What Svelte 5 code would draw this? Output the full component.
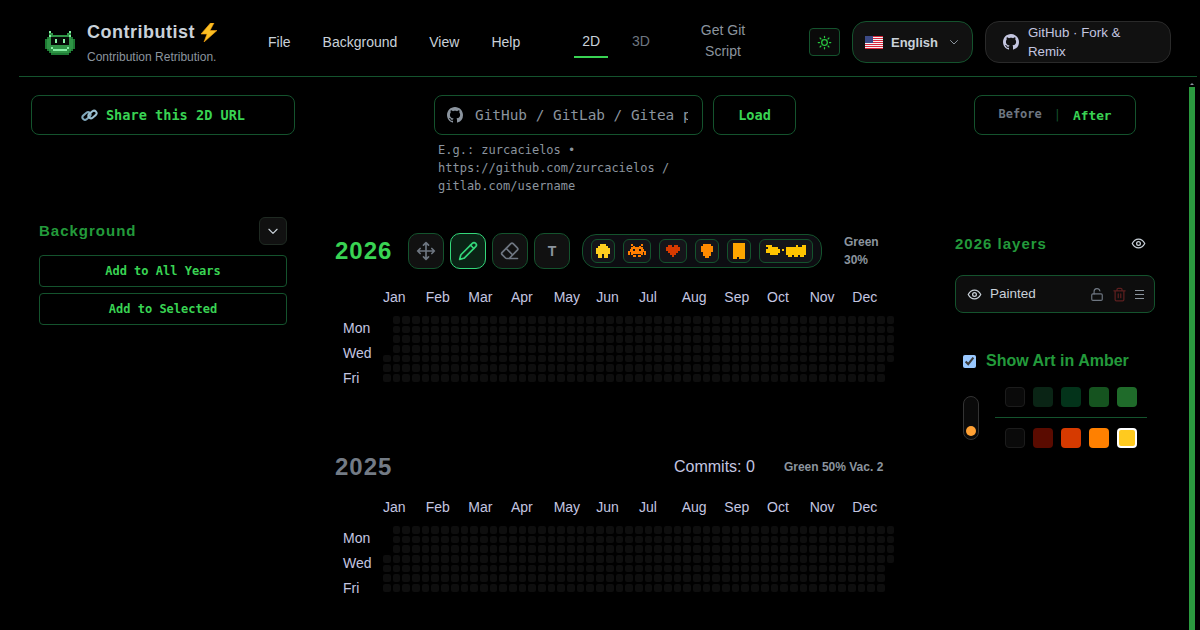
<script>
	const months = ['Jan', 'Feb', 'Mar', 'Apr', 'May', 'Jun', 'Jul', 'Aug', 'Sep', 'Oct', 'Nov', 'Dec'];
	const nav = ['File', 'Background', 'View', 'Help'];
	const github =
		'M8 0C3.58 0 0 3.58 0 8c0 3.54 2.29 6.53 5.47 7.59.4.07.55-.17.55-.38 0-.19-.01-.82-.01-1.49-2.01.37-2.53-.49-2.69-.94-.09-.23-.48-.94-.82-1.13-.28-.15-.68-.52-.01-.53.63-.01 1.08.58 1.23.82.72 1.21 1.87.87 2.33.66.07-.52.28-.87.51-1.07-1.78-.2-3.64-.89-3.64-3.95 0-.87.31-1.59.82-2.15-.08-.2-.36-1.02.08-2.12 0 0 .67-.21 2.2.82.64-.18 1.32-.27 2-.27.68 0 1.36.09 2 .27 1.53-1.04 2.2-.82 2.2-.82.44 1.1.16 1.92.08 2.12.51.56.82 1.27.82 2.15 0 3.07-1.87 3.75-3.65 3.95.29.25.54.73.54 1.48 0 1.07-.01 1.93-.01 2.2 0 .21.15.46.55.38A8.013 8.013 0 0016 8c0-4.42-3.58-8-8-8z';

	const logoColors = { g: '#1d7a33', m: '#2f9446', l: '#86f0a4', k: '#050a06' };
	const logo = [
		'..l.........l..',
		'..mm.......mm..',
		'..lmmmmmmmmml..',
		'.gmkkkkkkkkkmg.',
		'gmmkklkkklkkmmg',
		'gmmkklkkklkkmmg',
		'gmmkkkkkkkkkmmg',
		'gmmmmmmmmmmmmmg',
		'gmmlmmmmmmmlmmg',
		'.gmmlllllllmmg.',
		'..gmmmmmmmmmg..',
		'...ggggggggg...'
	];

	const stamps = [
		{
			color: '#ffce1f',
			px: 2,
			w: 24,
			rows: ['..###..', '.#####.', '#######', '#######', '#######', '.##.##.', '.##.##.']
		},
		{
			color: '#ff7f00',
			px: 1.64,
			w: 28,
			rows: [
				'..#.....#..',
				'...#...#...',
				'..#######..',
				'.##.###.##.',
				'###########',
				'#.#######.#',
				'#.#.....#.#',
				'...##.##...'
			]
		},
		{
			color: '#d63a00',
			px: 2,
			w: 28,
			rows: ['.##.##.', '#######', '#######', '.#####.', '..###..', '...#...']
		},
		{
			color: '#ff8a00',
			px: 2,
			w: 24,
			rows: ['.####.', '######', '######', '######', '.####.', '.####.', '..##..']
		},
		{
			color: '#ffa600',
			px: 2,
			w: 24,
			rows: ['######', '######', '######', '######', '######', '######', '######', '##.###']
		},
		{
			color: '#ffc400',
			px: 2,
			w: 54,
			rows: [
				'###............#..##',
				'.#####....##########',
				'#######.#.##########',
				'#######...##########',
				'..####....##########',
				'...........##.##.##.'
			]
		}
	];

	const greens = ['#0a0a0a', '#0a2415', '#03331a', '#15531f', '#1f6b2a'];
	const ambers = ['#0a0a0a', '#5a0b00', '#d63a00', '#ff8000', '#ffca1f'];

	// weeks run sunday first, so the year's first weekday decides the gap
	function cells(startDay, total) {
		return Array.from({ length: startDay + total }, (_, i) => i >= startDay);
	}

	const years = [
		{ year: 2026, active: true, days: cells(4, 365) },
		{ year: 2025, active: false, days: cells(3, 365) }
	];
</script>

{#snippet sprite(rows, color, px)}
	<svg
		width={rows[0].length * px}
		height={rows.length * px}
		viewBox="0 0 {rows[0].length} {rows.length}"
		shape-rendering="crispEdges"
		fill={color}
	>
		{#each rows as row, y}
			{#each row.split('') as ch, x}
				{#if ch === '#'}
					<rect {x} {y} width="1" height="1" />
				{/if}
			{/each}
		{/each}
	</svg>
{/snippet}

{#snippet eye()}
	<svg class="icon-15" viewBox="0 0 24 24" fill="none" stroke="currentColor" stroke-width="2" stroke-linecap="round" stroke-linejoin="round">
		<path d="M2 12s3.6-7 10-7 10 7 10 7-3.6 7-10 7-10-7-10-7z" />
		<circle cx="12" cy="12" r="3" />
	</svg>
{/snippet}

<div class="page">
	<header class="header">
		<div class="brand">
			<svg class="logo" width="30" height="24" viewBox="0 0 15 12" shape-rendering="crispEdges">
				{#each logo as row, y}
					{#each row.split('') as ch, x}
						{#if ch !== '.'}
							<rect {x} {y} width="1" height="1" fill={logoColors[ch]} />
						{/if}
					{/each}
				{/each}
			</svg>
			<div class="brand-text">
				<div class="brand-title">
					Contributist
					<svg width="18" height="19" viewBox="0 0 18 19">
						<path d="M10.5 0 1 11h6l-3 8 13-11.5h-7L14 0z" fill="#fbbf24" stroke="#f59e0b" stroke-width=".6" />
					</svg>
				</div>
				<div class="brand-sub">Contribution Retribution.</div>
			</div>
		</div>

		<nav class="menu">
			{#each nav as item}
				<span>{item}</span>
			{/each}
		</nav>

		<div class="tabs">
			<span class="tab tab-on">2D</span>
			<span class="tab">3D</span>
		</div>

		<div class="git-script">Get Git Script</div>

		<button class="theme-btn" aria-label="Theme">
			<svg width="15" height="15" viewBox="0 0 24 24" fill="none" stroke="currentColor" stroke-width="2" stroke-linecap="round">
				<circle cx="12" cy="12" r="4.5" />
				<path d="M12 2v2M12 20v2M4.9 4.9l1.4 1.4M17.7 17.7l1.4 1.4M2 12h2M20 12h2M4.9 19.1l1.4-1.4M17.7 6.3l1.4-1.4" />
			</svg>
		</button>

		<div class="lang">
			<svg class="flag" width="18" height="13" viewBox="0 0 18 13">
				<rect width="18" height="13" rx="1.5" fill="#f4f4f4" />
				<path d="M0 .5h18M0 2.5h18M0 4.5h18M0 6.5h18M0 8.5h18M0 10.5h18M0 12.5h18" stroke="#d8263c" stroke-width="1" />
				<rect width="8" height="7" fill="#3c4a85" />
			</svg>
			<span>English</span>
			<svg class="lang-chev" width="12" height="12" viewBox="0 0 24 24" fill="none" stroke="currentColor" stroke-width="2" stroke-linecap="round" stroke-linejoin="round">
				<path d="m5 9 7 7 7-7" />
			</svg>
		</div>

		<div class="fork">
			<svg width="16" height="16" viewBox="0 0 16 16" fill="currentColor"><path d={github} /></svg>
			<span>GitHub · Fork &amp; Remix</span>
		</div>
	</header>

	<div class="body">
		<div class="content">
			<div class="topbar">
				<button class="share">
					<svg width="17" height="15" viewBox="0 0 17 15" fill="none" stroke-width="2">
						<rect x="1" y="5.5" width="9" height="5" rx="2.5" stroke="#7fa6ba" transform="rotate(-40 5.5 8)" />
						<rect x="7" y="4" width="9" height="5" rx="2.5" stroke="#9cc0d2" transform="rotate(-40 11.5 6.5)" />
					</svg>
					Share this 2D URL
				</button>

				<div class="loader">
					<div class="loader-row">
						<label class="repo">
							<svg width="16" height="16" viewBox="0 0 16 16" fill="currentColor"><path d={github} /></svg>
							<input placeholder="GitHub / GitLab / Gitea profile URL" />
						</label>
						<button class="load">Load</button>
					</div>
					<p class="hint">E.g.: zurcacielos • https://github.com/zurcacielos / gitlab.com/username</p>
				</div>

				<div class="compare">
					<span class="before">Before</span>
					<span class="sep">|</span>
					<span class="after">After</span>
				</div>
			</div>

			<div class="workspace">
				<aside class="left">
					<div class="left-head">
						<h3>Background</h3>
						<button class="chev" aria-label="Collapse">
							<svg width="14" height="14" viewBox="0 0 24 24" fill="none" stroke="currentColor" stroke-width="2" stroke-linecap="round" stroke-linejoin="round">
								<path d="m5 9 7 7 7-7" />
							</svg>
						</button>
					</div>
					<button class="add">Add to All Years</button>
					<button class="add">Add to Selected</button>
				</aside>

				<main class="years">
					{#each years as y}
						<section class="year" class:active={y.active}>
							<div class="year-head">
								<span class="year-num">{y.year}</span>
								{#if y.active}
									<div class="tools">
										<button class="tool" aria-label="Move">
											<svg class="icon-20" viewBox="0 0 24 24" fill="none" stroke="currentColor" stroke-width="2" stroke-linecap="round" stroke-linejoin="round">
												<path d="M12 2v20M2 12h20M15 19l-3 3-3-3M19 9l3 3-3 3M5 9l-3 3 3 3M9 5l3-3 3 3" />
											</svg>
										</button>
										<button class="tool tool-on" aria-label="Draw">
											<svg class="icon-20" viewBox="0 0 24 24" fill="none" stroke="currentColor" stroke-width="2" stroke-linecap="round" stroke-linejoin="round">
												<path d="M21.2 6.8a2.8 2.8 0 0 0-4-4L3.8 16.2a2 2 0 0 0-.5.9L2 22l4.9-1.3a2 2 0 0 0 .9-.5z" />
												<path d="m15 5 4 4" />
											</svg>
										</button>
										<button class="tool" aria-label="Erase">
											<svg class="icon-20" viewBox="0 0 24 24" fill="none" stroke="currentColor" stroke-width="2" stroke-linecap="round" stroke-linejoin="round">
												<path d="M21 21H8a2 2 0 0 1-1.4-.6l-4-4a2 2 0 0 1 0-2.8L13 3.2a2 2 0 0 1 2.8 0l5 5a2 2 0 0 1 0 2.8L11 21" />
												<path d="m7.5 9 7.5 7.5" />
											</svg>
										</button>
										<button class="tool tool-text">T</button>
									</div>
									<div class="stamps">
										{#each stamps as s}
											<button class="stamp" aria-label="Stamp" style="width: {s.w}px">
												{@render sprite(s.rows, s.color, s.px)}
											</button>
										{/each}
									</div>
									<div class="stat stat-narrow">Green 30%</div>
								{:else}
									<span class="commits">Commits: 0</span>
									<div class="stat">Green 50% Vac. 2</div>
								{/if}
							</div>

							<div class="months">
								{#each months as m}
									<span>{m}</span>
								{/each}
							</div>

							<div class="graph">
								<div class="days">
									<span>Mon</span>
									<span>Wed</span>
									<span>Fri</span>
								</div>
								<div class="cells">
									{#each y.days as on}
										<i class:on></i>
									{/each}
								</div>
							</div>
						</section>
					{/each}
				</main>

				<aside class="right">
					<div class="layers-head">
						<h3>2026 layers</h3>
						<span class="eye-top">{@render eye()}</span>
					</div>

					<div class="layer">
						<span class="layer-eye">{@render eye()}</span>
						<span class="layer-name">Painted</span>
						<svg class="lock" width="14" height="15" viewBox="0 0 24 24" fill="none" stroke="currentColor" stroke-width="2" stroke-linecap="round" stroke-linejoin="round">
							<rect x="3" y="11" width="18" height="11" rx="2" />
							<path d="M7 11V7a5 5 0 0 1 9.9-1" />
						</svg>
						<svg class="trash" width="15" height="15" viewBox="0 0 24 24" fill="none" stroke="currentColor" stroke-width="2" stroke-linecap="round" stroke-linejoin="round">
							<path d="M3 6h18M19 6v14a2 2 0 0 1-2 2H7a2 2 0 0 1-2-2V6M8 6V4a2 2 0 0 1 2-2h4a2 2 0 0 1 2 2v2M10 11v6M14 11v6" />
						</svg>
						<svg class="grip" width="9" height="11" viewBox="0 0 9 11" fill="none" stroke="currentColor" stroke-width="1.2">
							<path d="M0 1.5h9M0 5.5h9M0 9.5h9" />
						</svg>
					</div>

					<label class="amber">
						<input type="checkbox" checked />
						<span>Show Art in Amber</span>
					</label>

					<div class="palette">
						<div class="slider"><b></b></div>
						<div class="ramps">
							<div class="ramp">
								{#each greens as c, i}
									<span class="swatch" class:first={i === 0} style="background: {c}"></span>
								{/each}
							</div>
							<div class="ramp-line"></div>
							<div class="ramp">
								{#each ambers as c, i}
									<span class="swatch" class:first={i === 0} class:picked={i === 4} style="background: {c}"></span>
								{/each}
							</div>
						</div>
					</div>
				</aside>
			</div>
		</div>

		<div class="rail">
			<span class="rail-up"></span>
			<span class="rail-thumb"></span>
		</div>
	</div>
</div>

<style>
	:global(body) {
		background: #000;
		font-family: 'Liberation Sans', Arial, sans-serif;
	}

	button {
		font: inherit;
		cursor: pointer;
		padding: 0;
	}

	h3 {
		margin: 0;
		font-size: 15px;
		font-weight: 700;
		letter-spacing: 1px;
		color: #239a3b;
	}

	.page {
		width: 1200px;
		height: 630px;
		overflow: hidden;
		background: #000;
		display: flex;
		flex-direction: column;
	}

	/* header */
	.header {
		height: 68px;
		flex-shrink: 0;
		margin: 0 3px 0 19px;
		padding: 8px 0 0 26px;
		display: flex;
		align-items: center;
		border-bottom: 1px solid #14532d;
	}

	.brand {
		width: 223px;
		display: flex;
		align-items: center;
		gap: 12px;
	}

	.logo {
		flex-shrink: 0;
		margin-top: 2px;
	}

	.brand-title {
		display: flex;
		align-items: center;
		gap: 5px;
		font-size: 18px;
		font-weight: 700;
		letter-spacing: 0.5px;
		color: #c9d1d9;
		height: 24px;
	}

	.brand-sub {
		margin-top: 6px;
		font-size: 12px;
		color: #8b949e;
	}

	.menu {
		display: flex;
		gap: 32px;
		font-size: 14px;
		color: #c9d1d9;
	}

	.tabs {
		display: flex;
		gap: 16px;
		margin-left: 54px;
		align-self: flex-start;
		margin-top: 22px;
	}

	.tab {
		height: 28px;
		box-sizing: border-box;
		padding: 1px 8px 0;
		font-size: 14px;
		line-height: 20px;
		color: #6e7681;
		border-bottom: 2px solid transparent;
	}

	.tab-on {
		color: #c9d1d9;
		border-bottom-color: #39d353;
	}

	.git-script {
		width: 64px;
		margin: 0 0 2px 33px;
		text-align: center;
		font-size: 14px;
		line-height: 21px;
		color: #8b949e;
	}

	.theme-btn {
		width: 31px;
		height: 28px;
		margin-left: 54px;
		display: flex;
		align-items: center;
		justify-content: center;
		background: #0a0a0a;
		border: 1px solid #14532d;
		border-radius: 4px;
		color: #28c840;
	}

	.lang {
		width: 121px;
		height: 42px;
		margin-left: 12px;
		box-sizing: border-box;
		display: flex;
		align-items: center;
		padding-left: 12px;
		gap: 8px;
		background: #111;
		border: 1px solid #14532d;
		border-radius: 14px;
		font-size: 13px;
		font-weight: 700;
		color: #c9d1d9;
	}

	.lang-chev {
		margin-left: 2px;
		color: #8b949e;
	}

	.fork {
		width: 186px;
		height: 42px;
		margin-left: 12px;
		box-sizing: border-box;
		display: flex;
		align-items: center;
		gap: 9px;
		padding-left: 17px;
		background: #111;
		border: 1px solid #2a2a2a;
		border-radius: 14px;
		font-size: 13.3px;
		line-height: 19px;
		color: #c4c6e0;
	}

	.fork span {
		width: 125px;
	}

	/* body */
	.body {
		flex: 1;
		min-height: 0;
		display: flex;
	}

	.content {
		width: 1186px;
		flex-shrink: 0;
	}

	.rail {
		width: 11px;
		display: flex;
		flex-direction: column;
		align-items: center;
		padding-top: 6px;
		padding-right: 3px;
	}

	.rail-up {
		width: 0;
		height: 0;
		border: 2px solid transparent;
		border-top: 0;
		border-bottom: 2px solid #8b949e;
		margin-bottom: 2px;
	}

	.rail-thumb {
		width: 6px;
		flex: 1;
		background: #2b9a3f;
	}

	.topbar {
		display: flex;
		align-items: flex-start;
		padding: 18px 0 0 31px;
		height: 122px;
		box-sizing: border-box;
		margin-bottom: 18px;
	}

	.share {
		width: 264px;
		height: 40px;
		display: flex;
		align-items: center;
		justify-content: center;
		gap: 8px;
		background: #000;
		border: 1px solid #14532d;
		border-radius: 8px;
		font-family: 'DejaVu Sans Mono', monospace;
		font-size: 13.6px;
		font-weight: 700;
		color: #39d353;
	}

	.loader {
		width: 362px;
		margin-left: 139px;
	}

	.loader-row {
		display: flex;
		gap: 10px;
	}

	.repo {
		width: 269px;
		height: 40px;
		box-sizing: border-box;
		display: flex;
		align-items: center;
		gap: 12px;
		padding: 0 14px 0 12px;
		border: 1px solid #14532d;
		border-radius: 8px;
		color: #8b949e;
	}

	.repo svg {
		flex-shrink: 0;
	}

	.repo input {
		flex: 1;
		min-width: 0;
		padding: 0;
		border: 0;
		outline: 0;
		background: none;
		font-family: 'DejaVu Sans Mono', monospace;
		font-size: 14.4px;
		color: #c9d1d9;
	}

	.repo input::placeholder {
		color: #8b949e;
		opacity: 1;
	}

	.load {
		width: 83px;
		height: 40px;
		background: #000;
		border: 1px solid #14532d;
		border-radius: 8px;
		font-family: 'DejaVu Sans Mono', monospace;
		font-size: 13.6px;
		font-weight: 700;
		color: #39d353;
	}

	.hint {
		width: 262px;
		margin: 6px 0 0 4px;
		font-family: 'DejaVu Sans Mono', monospace;
		font-size: 12px;
		line-height: 18px;
		color: #8b949e;
	}

	.compare {
		width: 162px;
		height: 40px;
		margin-left: 178px;
		box-sizing: border-box;
		display: flex;
		align-items: center;
		justify-content: center;
		gap: 12px;
		border: 1px solid #14532d;
		border-radius: 8px;
		font-family: 'DejaVu Sans Mono', monospace;
		font-weight: 700;
	}

	.before {
		margin-bottom: 2px;
		font-size: 12px;
		color: #6e7681;
	}

	.sep {
		font-size: 12px;
		font-weight: 400;
		color: #14532d;
	}

	.after {
		font-size: 12.8px;
		color: #39d353;
	}

	.workspace {
		display: flex;
		align-items: flex-start;
	}

	/* left panel */
	.left {
		width: 248px;
		margin-left: 39px;
		flex-shrink: 0;
	}

	.left-head {
		height: 28px;
		display: flex;
		align-items: center;
		justify-content: space-between;
		margin-bottom: 10px;
	}

	.left-head h3 {
		padding-bottom: 2px;
	}

	.chev {
		width: 28px;
		height: 28px;
		display: flex;
		align-items: center;
		justify-content: center;
		background: #111;
		border: 1px solid #1f2a22;
		border-radius: 6px;
		color: #c9d1d9;
	}

	.add {
		display: block;
		width: 100%;
		height: 32px;
		margin-bottom: 6px;
		background: #000;
		border: 1px solid #14532d;
		border-radius: 4px;
		font-family: 'DejaVu Sans Mono', monospace;
		font-size: 12px;
		font-weight: 700;
		color: #39d353;
	}

	/* calendars */
	.years {
		width: 560px;
		margin-left: 48px;
		padding-top: 16px;
		flex-shrink: 0;
	}

	.year + .year {
		margin-top: 58px;
	}

	.year-head {
		height: 36px;
		display: flex;
		align-items: center;
		margin-bottom: 14px;
	}

	.active .year-head {
		margin-bottom: 20px;
	}

	.year-num {
		width: 73px;
		flex-shrink: 0;
		font-size: 24px;
		font-weight: 700;
		letter-spacing: 1px;
		color: #737b85;
	}

	.active .year-num {
		color: #39d353;
	}

	.tools {
		display: flex;
		gap: 6px;
	}

	.tool {
		width: 36px;
		height: 36px;
		display: flex;
		align-items: center;
		justify-content: center;
		background: #111;
		border: 1px solid #14532d;
		border-radius: 10px;
		color: #6e7681;
	}

	.tool-on {
		background: #0a2315;
		border-color: #34d77a;
		color: #34d77a;
	}

	.tool-text {
		font-size: 14px;
		font-weight: 700;
		color: #8b949e;
	}

	.icon-20 {
		width: 20px;
		height: 20px;
	}

	.icon-15 {
		display: block;
		width: 15px;
		height: 15px;
	}

	.stamps {
		width: 240px;
		height: 34px;
		margin-left: 12px;
		box-sizing: border-box;
		display: flex;
		align-items: center;
		gap: 8px;
		padding-left: 8px;
		background: #0d0d12;
		border: 1px solid #14532d;
		border-radius: 14px;
		flex-shrink: 0;
	}

	.stamp {
		height: 24px;
		flex-shrink: 0;
		box-sizing: border-box;
		display: flex;
		align-items: center;
		justify-content: center;
		background: #15151a;
		border: 1px solid #14532d;
		border-radius: 6px;
	}

	.stat {
		font-size: 12px;
		font-weight: 700;
		line-height: 18px;
		color: #8b949e;
	}

	.stat-narrow {
		width: 44px;
		margin-left: 22px;
	}

	.commits {
		margin-left: 266px;
		font-size: 16px;
		color: #c4c6e0;
	}

	.year .stat:not(.stat-narrow) {
		margin-left: 29px;
	}

	.months {
		display: grid;
		grid-template-columns: repeat(12, 1fr);
		width: 512px;
		height: 16px;
		margin: 0 0 11px 48px;
		font-size: 14px;
		line-height: 16px;
		color: #c4c6e0;
	}

	.graph {
		display: flex;
	}

	.days {
		width: 40px;
		padding-left: 8px;
		display: flex;
		flex-direction: column;
		font-size: 14px;
		line-height: 25px;
		color: #c4c6e0;
	}

	.cells {
		width: 512px;
		display: grid;
		grid-auto-flow: column;
		grid-template-rows: repeat(7, 7.7px);
		grid-template-columns: repeat(53, 7.7px);
		gap: 2px;
	}

	.cells i {
		border-radius: 2px;
	}

	.cells i.on {
		background: #0e0e0e;
	}

	/* right panel */
	.right {
		width: 200px;
		margin-left: 60px;
		flex-shrink: 0;
		padding-top: 16px;
	}

	.layers-head {
		height: 20px;
		display: flex;
		align-items: center;
		justify-content: space-between;
		margin-bottom: 22px;
	}

	.eye-top {
		margin-right: 9px;
		color: #c9d1d9;
	}

	.layer {
		height: 38px;
		box-sizing: border-box;
		display: flex;
		align-items: center;
		padding: 0 10px 0 11px;
		background: #0d0d0d;
		border: 1px solid #14532d;
		border-radius: 8px;
		color: #c9d1d9;
	}

	.layer-name {
		flex: 1;
		margin: 0 0 2px 8px;
		font-size: 13.5px;
	}

	.lock {
		color: #6e7681;
	}

	.trash {
		margin-left: 8px;
		color: #5c1f1f;
	}

	.grip {
		margin-left: 8px;
		color: #8b949e;
	}

	.amber {
		display: flex;
		align-items: center;
		gap: 10px;
		margin: 39px 0 0 8px;
		font-size: 16px;
		font-weight: 700;
		color: #239a3b;
	}

	.amber input {
		width: 13px;
		height: 13px;
		margin: 0;
		color-scheme: dark;
	}

	.palette {
		display: flex;
		align-items: flex-start;
		margin-top: 17px;
		padding-left: 8px;
	}

	.slider {
		width: 16px;
		height: 44px;
		margin-top: 9px;
		box-sizing: border-box;
		display: flex;
		align-items: flex-end;
		justify-content: center;
		padding-bottom: 3px;
		background: #0a0a0a;
		border: 1px solid #333;
		border-radius: 8px;
	}

	.slider b {
		width: 10px;
		height: 10px;
		border-radius: 50%;
		background: #ffa033;
	}

	.ramps {
		width: 152px;
		margin-left: 16px;
	}

	.ramp {
		display: flex;
		gap: 8px;
		padding-left: 10px;
	}

	.ramp-line {
		height: 1px;
		margin: 10px 0;
		background: #14532d;
	}

	.swatch {
		width: 20px;
		height: 20px;
		box-sizing: border-box;
		border-radius: 4px;
	}

	.swatch.first {
		border: 1px solid #1c1c1c;
	}

	.swatch.picked {
		border: 2px solid #fff;
	}
</style>
